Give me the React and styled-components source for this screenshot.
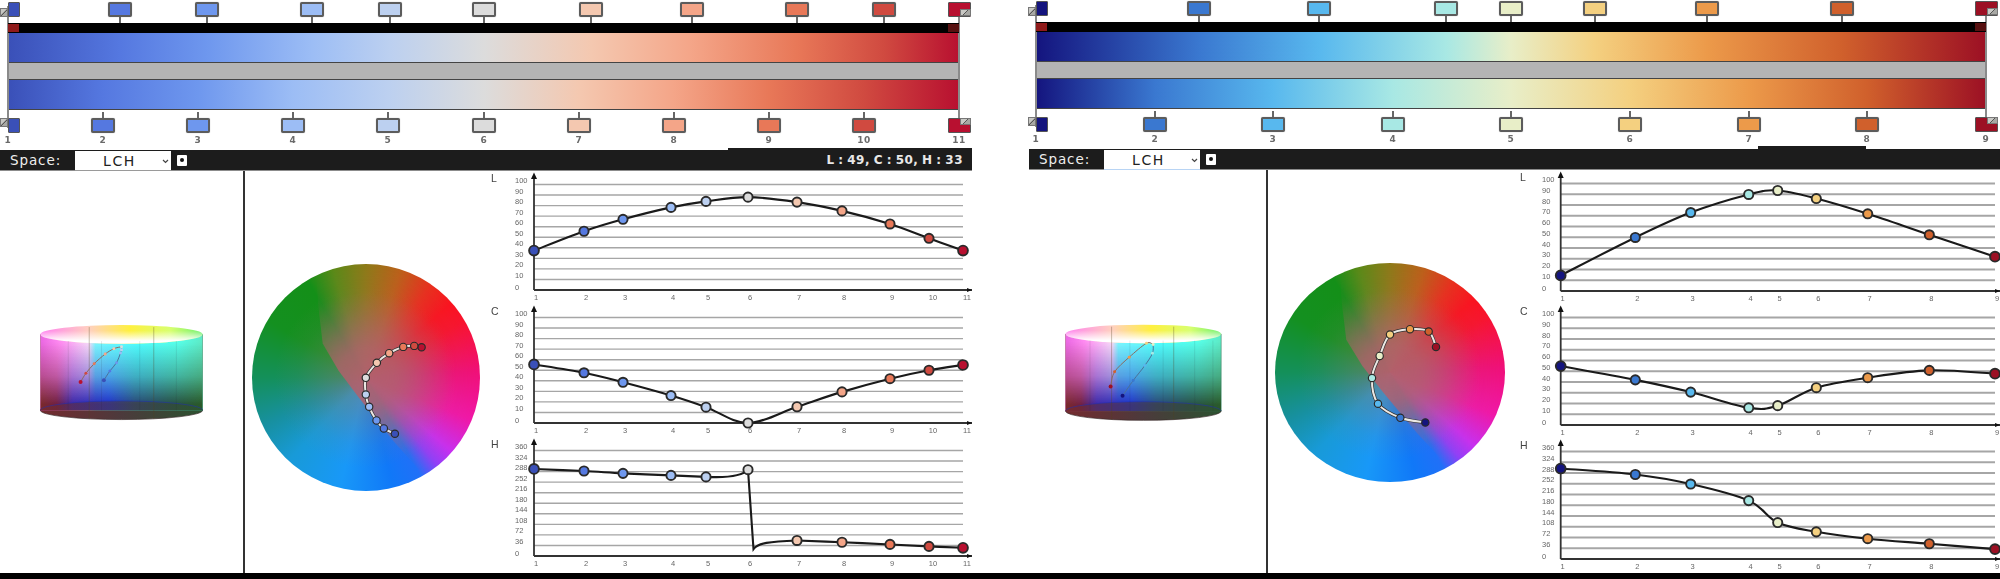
import React, { useId } from 'react';
import styled, { createGlobalStyle } from 'styled-components';

const GlobalStyle = createGlobalStyle`
  html, body { margin: 0; padding: 0; background: #fff; overflow: hidden; }
  * { box-sizing: border-box; }
`;

const Page = styled.div`
  width: 2000px;
  height: 579px;
  display: flex;
  flex-direction: column;
  background: #fff;
  overflow: hidden;
`;

const Panels = styled.div`
  display: flex;
  height: 573px;
`;

const Footer = styled.div`
  height: 6px;
  background: #000;
`;

const Panel = styled.section`
  position: relative;
  width: 1000px;
  display: flex;
  flex-direction: column;
  margin-top: ${p => p.$shift}px;
  height: calc(100% + ${p => -p.$shift}px);
  filter: blur(${p => p.$blur}px);
`;

const Ramp = styled.div`
  margin-left: ${p => p.$left}px;
  width: ${p => p.$width}px;
  position: relative;
`;

const Rail = styled.div`
  position: absolute;
  top: 6px;
  height: 122px;
  width: 2px;
  background: #8a8a8a;
  ${p => (p.$end ? 'right: -1px;' : 'left: -1px;')}
`;

const HandleTrack = styled.div`
  position: relative;
  height: ${p => p.$height}px;
`;

const Handle = styled.div`
  position: absolute;
  top: ${p => p.$top}px;
  width: 24px;
  height: 15px;
  margin-left: -12px;
  border: 2px solid ${p => p.$edge || '#5c5c5c'};
  border-radius: 2px;
  box-shadow: 0 0 1px #999;

  &::after {
    content: '';
    position: absolute;
    left: 9px;
    width: 2px;
    height: 6px;
    background: #666;
    ${p => (p.$below ? 'bottom: 100%; margin-bottom: 2px;' : 'top: 100%; margin-top: 2px;')}
  }
`;

const EndCap = styled.div`
  position: absolute;
  top: ${p => p.$top}px;
  height: 15px;
  border-radius: 1px;
  border: 1px solid #555;
  ${p => (p.$end
    ? 'right: -12px; width: 23px;'
    : 'left: 0; width: 12px;')}
`;

const Swatch = styled.div`
  position: absolute;
  width: ${p => (p.$end ? 11 : 8)}px;
  height: ${p => (p.$end ? 7 : 9)}px;
  background: linear-gradient(135deg, #c8c8c4 45%, #555 48%, #555 54%, #a8a8a4 57%);
  border: 1px solid #777;
  ${p => (p.$end
    ? `right: -12px; top: ${p.$top}px;`
    : `left: -8px; top: ${p.$top}px;`)}
`;

const BlackBar = styled.div`
  position: relative;
  height: 10px;
  background: #000;
`;

const BarMark = styled.div`
  position: absolute;
  top: 1px;
  width: 11px;
  height: 8px;
  background: #8f1a1a;
  ${p => (p.$end ? 'right: 0; opacity: .6;' : 'left: 0;')}
`;

const GradientBar = styled.div`
  height: 30px;
  border-bottom: 1px solid #444;
`;

const GrayBar = styled.div`
  height: 17px;
  background: #b4b4b4;
  border-bottom: 1px solid #444;
`;

const LabelRow = styled.div`
  position: relative;
  height: 16px;
`;

const StopLabel = styled.span`
  position: absolute;
  top: 1px;
  transform: translateX(-50%);
  font: 700 9px "DejaVu Sans", sans-serif;
  letter-spacing: .5px;
  color: #6a6a6a;
`;

const Toolbar = styled.div`
  position: relative;
  margin-left: ${p => p.$left}px;
  width: ${p => p.$width}px;
  height: 21px;
  padding-left: 10px;
  display: flex;
  align-items: center;
  background: #1c1c1c;
  border-bottom: 1px solid #8c8c8c;
  color: #eee;
  font-family: "DejaVu Sans", sans-serif;

  &::before {
    content: '';
    position: absolute;
    left: ${p => p.$stepLeft}px;
    width: ${p => p.$stepWidth}px;
    top: -${p => p.$stepHeight}px;
    height: ${p => p.$stepHeight}px;
    background: #1c1c1c;
  }
`;

const SpaceLabel = styled.span`
  width: 65px;
  font-size: 13.5px;
  letter-spacing: .9px;
`;

const SelectBox = styled.div`
  position: relative;
  width: 96px;
  height: 20px;
  margin-top: 1px;
  background: #fff;
  color: #222;
  font-size: 14px;
  letter-spacing: 1.6px;
  line-height: 20px;
  padding-left: 28px;
  border-bottom: 1px solid ${p => p.$line};
`;

const Chevron = styled.svg`
  position: absolute;
  right: 2px;
  top: 8px;
`;

const DotButton = styled.div`
  width: 10px;
  height: 11px;
  margin-left: 6px;
  background: #fff;
  border-radius: 1px;
  display: flex;
  align-items: center;
  justify-content: center;

  &::after {
    content: '';
    width: 4px;
    height: 4px;
    border-radius: 50%;
    background: #111;
  }
`;

const Readout = styled.span`
  margin-left: auto;
  padding-right: 9px;
  font-size: 12px;
  font-weight: 700;
  letter-spacing: .5px;
  word-spacing: -1px;
  color: #e8e8e8;
`;

const Body = styled.div`
  flex: 1;
  display: flex;
  min-height: 0;
`;

const SolidColumn = styled.div`
  width: ${p => p.$width}px;
  padding: 154px 0 0 ${p => p.$pad}px;
`;

const Divider = styled.div`
  width: 2px;
  background: #333;
`;

const WheelColumn = styled.div`
  width: ${p => p.$width}px;
  padding: 93px 0 0 ${p => p.$pad}px;
`;

const WheelDisc = styled.div`
  position: relative;
  width: ${p => p.$w}px;
  height: ${p => p.$h}px;
  border-radius: 50%;
  overflow: hidden;
  background:
    radial-gradient(closest-side, rgba(135, 125, 115, .6) 0%, rgba(135, 125, 115, .38) 30%, rgba(135, 125, 115, .1) 60%, rgba(135, 125, 115, 0) 80%),
    conic-gradient(from 0deg,
      #8e7a18 0deg, #bc601a 18deg, #e8301e 35deg, #fa1420 49deg, #f8142e 60deg,
      #f01078 87deg, #f018a8 112deg, #c830f0 131deg, #9040f8 141deg, #2070f8 151deg,
      #1078f8 166deg, #1898f8 193deg, #189ad8 223deg, #1790a0 245deg, #14905a 270deg,
      #149020 300deg, #148f18 329deg, #5a8a18 343deg, #8e7a18 360deg);
`;

const WheelCore = styled.div`
  position: absolute;
  inset: 0;
  clip-path: polygon(28% 0, 29% 18%, 31% 35%, 38% 47%, 47% 59%, 62% 78%, 75% 92.6%, 100% 100%, 100% 0);
  background: radial-gradient(closest-side, rgba(178, 96, 108, .95) 0%, rgba(178, 96, 108, .8) 25%, rgba(178, 96, 108, .42) 50%, rgba(178, 96, 108, .08) 75%, rgba(178, 96, 108, 0) 100%);
  filter: blur(1.5px);
`;

const WheelPath = styled.svg`
  position: absolute;
  inset: 0;
  width: 100%;
  height: 100%;
`;

const ChartColumn = styled.div`
  display: flex;
  flex-direction: column;
  width: ${p => p.$width}px;
`;

const ChartSvg = styled.svg`
  display: block;
  flex: none;
`;

const AxisText = styled.text`
  font: 7.5px "Liberation Sans", sans-serif;
  fill: #666;
`;

const SeriesName = styled.text`
  font: 10.5px "Liberation Sans", sans-serif;
  fill: #444;
`;

const smooth = pts => {
  let d = `M${pts[0][0]},${pts[0][1]}`;
  for (let i = 0; i < pts.length - 1; i++) {
    const p0 = pts[i - 1] || pts[i];
    const p1 = pts[i];
    const p2 = pts[i + 1];
    const p3 = pts[i + 2] || p2;
    const c1x = p1[0] + (p2[0] - p0[0]) / 6;
    const c1y = p1[1] + (p2[1] - p0[1]) / 6;
    const c2x = p2[0] - (p3[0] - p1[0]) / 6;
    const c2y = p2[1] - (p3[1] - p1[1]) / 6;
    d += ` C${c1x},${c1y} ${c2x},${c2y} ${p2[0]},${p2[1]}`;
  }
  return d;
};

const TEN = [100, 90, 80, 70, 60, 50, 40, 30, 20, 10, 0];
const HUE = [360, 324, 288, 252, 216, 180, 144, 108, 72, 36, 0];

const Chart = ({ name, ticks, max, values, xs, colors, geo, line }) => {
  const { width, height, axisX, plotRight, arrowRight, topY, axisY, labelX } = geo;
  const toY = v => axisY - (v / max) * (axisY - topY);
  const pts = xs.map((x, i) => [x, toY(values[i])]);
  return (
    <ChartSvg width={width} height={height} viewBox={`0 0 ${width} ${height}`}>
      <SeriesName x={geo.nameX} y={11}>{name}</SeriesName>
      {ticks.map(t => (
        <g key={t}>
          {t !== 0 && (
            <line x1={axisX} x2={plotRight} y1={toY(t)} y2={toY(t)} stroke="#a6a6a6" strokeWidth={geo.gridWidth} />
          )}
          <AxisText x={labelX} y={toY(t) - (t === 0 ? 0 : 1.5)}>{t}</AxisText>
        </g>
      ))}
      <line x1={axisX} x2={axisX} y1={4} y2={axisY} stroke="#333" strokeWidth="1.8" />
      <line x1={axisX} x2={arrowRight} y1={axisY} y2={axisY} stroke="#333" strokeWidth="1.8" />
      <path d={`M${axisX - 3},${8} L${axisX},${1.5} L${axisX + 3},${8} Z`} fill="#111" />
      <path d={`M${arrowRight - 5},${axisY - 2} L${arrowRight},${axisY} L${arrowRight - 5},${axisY + 2} Z`} fill="#111" />
      {xs.map((x, i) => (
        <AxisText key={x} x={x + (i >= 9 ? 4 : 2)} y={axisY + 10} textAnchor="middle">{i + 1}</AxisText>
      ))}
      <path d={line ? line(pts) : smooth(pts)} fill="none" stroke="#1a1a1a" strokeWidth="2.1" />
      {pts.map(([x, y], i) => (
        <circle
          key={x}
          cx={x}
          cy={y}
          r={i === 0 || i === pts.length - 1 ? 4.9 : 4.6}
          fill={colors[i]}
          stroke="#2a2a2a"
          strokeWidth="1.9"
        />
      ))}
    </ChartSvg>
  );
};

const Solid = ({ cfg, colors }) => {
  const id = useId().replace(/[^a-z0-9]/gi, '');
  const { vb, l, r, topY, botY, ry, width, height, heavy, light, curve } = cfg;
  const cx = (l + r) / 2;
  const rx = (r - l) / 2;
  return (
    <svg width={width} height={height} viewBox={vb}>
      <defs>
        <linearGradient id={`${id}t`} x1="0" x2="1" y1="0" y2="0">
          <stop offset="0" stopColor="#e85ae0" />
          <stop offset=".12" stopColor="#ff80f0" />
          <stop offset=".3" stopColor="#f8d8f8" />
          <stop offset=".34" stopColor="#70f8ff" />
          <stop offset=".6" stopColor="#40ffff" />
          <stop offset=".85" stopColor="#48ffe8" />
          <stop offset="1" stopColor="#50e8c0" />
        </linearGradient>
        <linearGradient id={`${id}b`} x1="0" x2="1" y1="0" y2="0">
          <stop offset="0" stopColor="#7a2a2a" />
          <stop offset=".1" stopColor="#702040" />
          <stop offset=".2" stopColor="#3a28a8" />
          <stop offset=".42" stopColor="#2030c8" />
          <stop offset=".58" stopColor="#284878" />
          <stop offset=".8" stopColor="#285048" />
          <stop offset="1" stopColor="#2a5a28" />
        </linearGradient>
        <linearGradient id={`${id}v`} x1="0" x2="0" y1="0" y2="1">
          <stop offset=".1" stopColor="#000" />
          <stop offset=".55" stopColor="#707070" />
          <stop offset=".92" stopColor="#fff" />
        </linearGradient>
        <linearGradient id={`${id}c`} x1="0" x2="1" y1="0" y2="0">
          <stop offset="0" stopColor="#ff80f0" />
          <stop offset=".3" stopColor="#ffd0c0" />
          <stop offset=".55" stopColor="#fff040" />
          <stop offset=".8" stopColor="#d8ff70" />
          <stop offset="1" stopColor="#70f070" />
        </linearGradient>
        <linearGradient id={`${id}w`} x1="0" x2="0" y1="0" y2="1">
          <stop offset=".3" stopColor="#fff" stopOpacity="0" />
          <stop offset=".85" stopColor="#fff" stopOpacity="1" />
        </linearGradient>
        <linearGradient id={`${id}f`} x1="0" x2="1" y1="0" y2="0">
          <stop offset="0" stopColor="#742a2e" />
          <stop offset=".5" stopColor="#4c3a3c" />
          <stop offset="1" stopColor="#2c5230" />
        </linearGradient>
        <mask id={`${id}m`}>
          <rect x={l} y={topY} width={r - l} height={botY - topY} fill={`url(#${id}v)`} />
        </mask>
      </defs>
      <ellipse cx={cx} cy={botY} rx={rx} ry={ry} fill={`url(#${id}f)`} stroke="#3a2a2a" strokeWidth="2" />
      <rect x={l} y={topY} width={r - l} height={botY - topY} fill={`url(#${id}t)`} opacity=".92" />
      <rect x={l} y={topY} width={r - l} height={botY - topY} fill={`url(#${id}b)`} mask={`url(#${id}m)`} />
      <path d={`M${l},${botY} A${rx},${ry} 0 0 1 ${r},${botY}`} fill={`url(#${id}f)`} opacity=".55" />
      <path d={`M${l},${botY} A${rx},${ry} 0 0 1 ${r},${botY}`} fill="none" stroke="#2030b0" strokeWidth="2" opacity=".8" />
      <ellipse cx={cx} cy={topY} rx={rx} ry={ry} fill={`url(#${id}c)`} />
      <ellipse cx={cx} cy={topY} rx={rx} ry={ry} fill={`url(#${id}w)`} />
      {light.map(x => (
        <line key={x} x1={x} x2={x} y1={topY + 20} y2={botY} stroke="#223" strokeOpacity=".16" strokeWidth="2" />
      ))}
      {heavy.map(x => (
        <line key={x} x1={x} x2={x} y1={topY - 22} y2={botY + ry - 2} stroke="#542" strokeOpacity=".5" strokeWidth="2" />
      ))}
      <line x1={l} x2={l} y1={topY} y2={botY} stroke="#702030" strokeOpacity=".5" strokeWidth="2" />
      <line x1={r} x2={r} y1={topY} y2={botY} stroke="#205030" strokeOpacity=".6" strokeWidth="2" />
      <path d={smooth(curve.slice(0, cfg.warm))} fill="none" stroke="#8a6a60" strokeWidth="3" />
      <path d={smooth(curve.slice(cfg.warm - 1))} fill="none" stroke="#4a7098" strokeWidth="3" />
      {curve.map(([x, y], i) => (
        <circle key={x + y} cx={x} cy={y} r={i === 0 || i === curve.length - 1 ? 6 : 4.5} fill={colors[i]} />
      ))}
    </svg>
  );
};

const ColorWheel = ({ cfg, colors }) => (
  <WheelDisc $w={cfg.w} $h={cfg.h}>
    <WheelCore />
    <WheelPath viewBox={cfg.vb} preserveAspectRatio="none">
      <path d={smooth(cfg.points)} fill="none" stroke="#333" strokeWidth="10" />
      <path d={smooth(cfg.points)} fill="none" stroke="#ece8e4" strokeWidth="6" />
      {cfg.points.map(([x, y], i) => (
        <circle key={x + y} cx={x} cy={y} r="11" fill={colors[i]} stroke="#2a2a2a" strokeWidth="3.5" />
      ))}
    </WheelPath>
  </WheelDisc>
);

const grad = (stops, colors, from, to) =>
  `linear-gradient(90deg, ${stops.map((s, i) => `${colors[i]} ${(((s - from) / (to - from)) * 100).toFixed(2)}%`).join(', ')})`;

const EditorPanel = ({ cfg }) => {
  const { barLeft, barRight, topStops, bottomStops, colors } = cfg;
  const width = barRight - barLeft;
  const last = colors.length - 1;
  return (
    <Panel $shift={cfg.shift} $blur={cfg.blur}>
      <Ramp $left={barLeft} $width={width}>
        <Rail />
        <Rail $end />
        <HandleTrack $height={23}>
          <EndCap $top={2} style={{ background: colors[0] }} />
          <Swatch $top={8} />
          {topStops.slice(1, last).map((s, i) => (
            <Handle key={s} $top={2} style={{ left: s - barLeft, background: colors[i + 1] }} />
          ))}
          <EndCap $end $top={2} style={{ background: colors[last] }} />
          <Swatch $end $top={9} />
        </HandleTrack>
        <BlackBar>
          <BarMark />
          <BarMark $end />
        </BlackBar>
        <GradientBar style={{ background: grad(topStops, colors, barLeft, barRight) }} />
        <GrayBar />
        <GradientBar style={{ background: grad(bottomStops, colors, barLeft, barRight) }} />
        <HandleTrack $height={24}>
          <EndCap $top={8} style={{ background: colors[0] }} />
          <Swatch $top={8} />
          {bottomStops.slice(1, last).map((s, i) => (
            <Handle key={s} $below $top={8} style={{ left: s - barLeft, background: colors[i + 1] }} />
          ))}
          <EndCap $end $top={8} style={{ background: colors[last] }} />
          <Swatch $end $top={8} />
        </HandleTrack>
        <LabelRow>
          {bottomStops.map((s, i) => (
            <StopLabel key={s} style={{ left: s - barLeft }}>{i + 1}</StopLabel>
          ))}
        </LabelRow>
      </Ramp>
      <Toolbar
        $left={cfg.toolLeft}
        $width={cfg.toolWidth}
        $stepLeft={cfg.stepLeft}
        $stepWidth={cfg.stepWidth}
        $stepHeight={cfg.stepHeight}
      >
        <SpaceLabel>Space:</SpaceLabel>
        <SelectBox $line={cfg.selectLine}>
          LCH
          <Chevron width="7" height="5" viewBox="0 0 7 5">
            <path d="M1 1 L3.5 3.5 L6 1" fill="none" stroke="#444" strokeWidth="1.2" />
          </Chevron>
        </SelectBox>
        <DotButton />
        {cfg.readout && <Readout>{cfg.readout}</Readout>}
      </Toolbar>
      <Body>
        <SolidColumn $width={cfg.solidCol} $pad={cfg.solidPad}>
          <Solid cfg={cfg.solid} colors={cfg.solidColors} />
        </SolidColumn>
        <Divider />
        <WheelColumn $width={cfg.wheelCol} $pad={cfg.wheelPad}>
          <ColorWheel cfg={cfg.wheel} colors={[...colors].reverse()} />
        </WheelColumn>
        <ChartColumn $width={cfg.geo.width}>
          <Chart name="L" ticks={TEN} max={100} values={cfg.L} xs={cfg.xs} colors={colors} geo={cfg.geo} />
          <Chart name="C" ticks={TEN} max={100} values={cfg.C} xs={cfg.xs} colors={colors} geo={cfg.geo} />
          <Chart name="H" ticks={HUE} max={360} values={cfg.H} xs={cfg.xs} colors={colors} geo={cfg.geo} line={cfg.hueLine} />
        </ChartColumn>
      </Body>
    </Panel>
  );
};

const leftColors = ['#3a50b8', '#5578e0', '#6e97ee', '#9cbdf5', '#bcd0f0', '#dcdcdc', '#f4c8b0', '#f4a588', '#e87858', '#d04a40', '#b81030'];
const rightColors = ['#14147e', '#3a78d0', '#58b8ee', '#a8e8e4', '#e8eec8', '#f4d080', '#ec9a4a', '#d0602c', '#9c1024'];

const leftPanel = {
  shift: 0,
  blur: 0.3,
  barLeft: 8,
  barRight: 959,
  colors: leftColors,
  topStops: [8, 120, 207, 312, 390, 484, 591, 692, 797, 884, 959],
  bottomStops: [8, 103, 198, 293, 388, 484, 579, 674, 769, 864, 959],
  toolLeft: 0,
  toolWidth: 972,
  stepLeft: 728,
  stepWidth: 244,
  stepHeight: 2,
  selectLine: '#9a9a9a',
  readout: 'L : 49, C : 50, H : 33',
  solidCol: 243,
  solidPad: 40,
  wheelCol: 244,
  wheelPad: 7,
  solid: {
    vb: '120 462 490 288',
    width: 163,
    height: 96,
    l: 121,
    r: 609,
    topY: 490,
    botY: 718,
    ry: 28,
    heavy: [268, 462],
    light: [205, 305, 420, 530],
    warm: 6,
    curve: [[242, 633], [258, 607], [283, 578], [316, 549], [342, 533], [365, 527], [365, 536], [362, 546], [350, 575], [330, 600], [312, 628]],
  },
  solidColors: leftColors.slice().reverse(),
  wheel: {
    w: 228,
    h: 227,
    vb: '757 278 683 682',
    points: [[1265, 528], [1243, 524], [1210, 527], [1168, 546], [1131, 575], [1098, 620], [1098, 670], [1108, 707], [1130, 748], [1152, 772], [1185, 788]],
  },
  geo: { width: 486, height: 133, axisX: 45, plotRight: 474, arrowRight: 483, topY: 13.5, axisY: 119, labelX: 26, nameX: 2, gridWidth: 1.4 },
  xs: [45, 95, 134, 182, 217, 259, 308, 353, 401, 440, 474],
  L: [37.4, 55.7, 67, 78.3, 84, 88, 83.3, 75, 62.6, 49, 37.4],
  C: [55.5, 47.6, 38.6, 26, 15, 0, 15.4, 29.5, 42, 50, 55],
  H: [297, 290, 282, 275, 270, 294.5, 53, 47, 39.5, 32.7, 28],
  hueLine: pts =>
    `${smooth(pts.slice(0, 5))} C${pts[4][0] + 20},${pts[4][1] + 1} ${pts[5][0] - 6},${pts[4][1]} ${pts[5][0]},${pts[5][1]} L264.5,112 C269,106 280,${pts[6][1] + 1} ${pts[6][0]},${pts[6][1]} ${smooth(pts.slice(6)).replace('M', 'L')}`,
};

const rightPanel = {
  shift: -1,
  blur: 0.45,
  barLeft: 36,
  barRight: 986,
  colors: rightColors,
  topStops: [36, 199, 319, 446, 511, 595, 707, 842, 986],
  bottomStops: [36, 155, 273, 393, 511, 630, 749, 867, 986],
  toolLeft: 29,
  toolWidth: 971,
  stepLeft: 729,
  stepWidth: 108,
  stepHeight: 3,
  selectLine: '#b8d4f4',
  readout: '',
  solidCol: 266,
  solidPad: 65,
  wheelCol: 250,
  wheelPad: 7,
  solid: {
    vb: '135 460 472 295',
    width: 157,
    height: 98,
    l: 136,
    r: 605,
    topY: 490,
    botY: 722,
    ry: 28,
    heavy: [275, 462],
    light: [210, 330, 430, 525, 580],
    warm: 5,
    curve: [[272, 648], [284, 604], [328, 560], [380, 518], [400, 522], [398, 548], [375, 585], [340, 630], [308, 676]],
  },
  solidColors: rightColors.slice().reverse(),
  wheel: {
    w: 230,
    h: 219,
    vb: '765 280 690 655',
    points: [[1248, 531], [1226, 485], [1170, 478], [1110, 494], [1079, 558], [1056, 624], [1074, 701], [1141, 743], [1216, 757]],
  },
  geo: { width: 482, height: 134, axisX: 42.7, plotRight: 477, arrowRight: 482, topY: 13.5, axisY: 121, labelX: 24, nameX: 2, gridWidth: 2 },
  xs: [42.7, 117.3, 172.7, 230.7, 259.7, 298.3, 349.7, 411.3, 477],
  L: [14.5, 49.8, 73, 89.8, 93.5, 86, 71.8, 52.3, 31.9],
  C: [54.8, 42, 30.6, 16, 18, 34.7, 44, 50.8, 47.7],
  H: [303, 283, 251, 195.5, 122, 91, 68, 51, 33],
};

export default function App() {
  return (
    <Page>
      <GlobalStyle />
      <Panels>
        <EditorPanel cfg={leftPanel} />
        <EditorPanel cfg={rightPanel} />
      </Panels>
      <Footer />
    </Page>
  );
}
